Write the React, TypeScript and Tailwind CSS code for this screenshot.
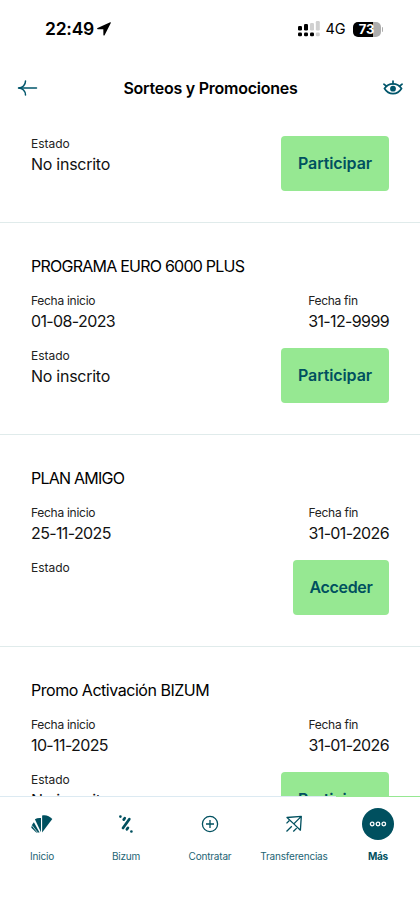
import { clsx } from "clsx";
import type { ReactNode } from "react";

type Promo = {
  title: string;
  start: string;
  end: string;
  status: string;
  action: string;
};

const promos: Promo[] = [
  {
    title: "PROGRAMA EURO 6000 PLUS",
    start: "01-08-2023",
    end: "31-12-9999",
    status: "No inscrito",
    action: "Participar",
  },
  {
    title: "PLAN AMIGO",
    start: "25-11-2025",
    end: "31-01-2026",
    status: "",
    action: "Acceder",
  },
  {
    title: "Promo Activación BIZUM",
    start: "10-11-2025",
    end: "31-01-2026",
    status: "No inscrito",
    action: "Participar",
  },
];

function StatusBar() {
  return (
    <div className="flex h-[58px] shrink-0 items-center justify-between pl-[45px] pr-[37px] text-black">
      <div className="flex items-center gap-[3px]">
        <span className="text-[17.5px] font-semibold tracking-[-0.25px]">22:49</span>
        <svg width="14" height="14" viewBox="0 0 14 14" fill="currentColor">
          <path d="M13.2.2.6 5.9c-.8.4-.6 1.3.2 1.3l5.500.1.1 5.600c0 .8 1 1 1.300.2L13.800.9c.2-.5-.1-.9-.6-.7Z" />
        </svg>
      </div>
      <div className="flex items-center">
        <svg width="22" height="16" viewBox="0 0 22 16" fill="black">
          <rect x="0" y="5" width="4" height="4.5" rx="1.2" />
          <rect x="6" y="3" width="4" height="6.5" rx="1.2" />
          <rect x="12" y="2" width="4" height="7.5" rx="1.2" fill="#d0d0d0" />
          <rect x="17.8" y="0" width="4" height="9.5" rx="1.2" fill="#d0d0d0" />
          <rect x="0" y="11.5" width="4" height="3.8" rx="1.2" />
          <rect x="6" y="11.5" width="4" height="3.8" rx="1.2" />
          <rect x="12" y="11.5" width="4" height="3.8" rx="1.2" />
          <rect x="17.8" y="11.5" width="4" height="3.8" rx="1.2" fill="#d0d0d0" />
        </svg>
        <span className="ml-[6px] w-[21px] text-[14.5px] tracking-[-0.2px]">4G</span>
        <div className="ml-[6px] flex items-center gap-px">
          <div className="flex h-[15px] w-[28px] items-center justify-center rounded-[5px] bg-[linear-gradient(to_right,#000_73%,#adadad_73%)] text-[13px] font-bold leading-none text-white">
            73
          </div>
          <div className="h-[5px] w-[1.5px] rounded-r-full bg-[#adadad]" />
        </div>
      </div>
    </div>
  );
}

function Header() {
  return (
    <header className="flex h-[60px] shrink-0 items-center justify-between px-[17px] text-[#00566b]">
      <svg width="21" height="17" viewBox="0 0 21 17" fill="none" stroke="currentColor" strokeWidth="1.5" strokeLinecap="round">
        <path d="M19.500 8H1.500" />
        <path d="M8.500 1C8.500 5 5.500 8 1.500 8c4 0 7 3 7 7" />
      </svg>
      <h1 className="text-[16px] font-semibold tracking-[-0.24px] text-black">
        Sorteos y Promociones
      </h1>
      <svg width="20" height="16" viewBox="0 0 20 16" fill="none" stroke="currentColor" strokeWidth="1.7" strokeLinecap="round">
        <path d="M1.5 8.5C3.5 5.5 6.500 3.800 10 3.800s6.500 1.700 8.500 4.700c-2 3.400-5 5.200-8.500 5.200S3.500 11.900 1.500 8.500Z" />
        <path d="M10 3.800V1M3.200 6 .9 4.200M16.800 6l2.300-1.800" />
        <circle cx="10" cy="8.700" r="2.900" fill="currentColor" stroke="none" />
      </svg>
    </header>
  );
}

type FieldProps = { label: string; value: string; isDate?: boolean };

function Field({ label, value, isDate }: FieldProps) {
  return (
    <div>
      <p
        className={clsx(
          "text-[12px] leading-4 text-[#222]",
          isDate ? "tracking-[-0.28px]" : "tracking-[-0.02px]"
        )}
      >
        {label}
      </p>
      <p
        className={clsx(
          "text-[16px] leading-6 text-[#111]",
          isDate ? "tracking-[-0.62px]" : "tracking-[-0.26px]"
        )}
      >
        {value}
      </p>
    </div>
  );
}

function StatusRow({ status, action }: { status: string; action: string }) {
  return (
    <div className="flex items-start justify-between">
      <Field label="Estado" value={status} />
      <button
        className={clsx(
          "h-[54.7px] rounded-[4px] bg-[#96e892] pb-px text-center text-[16px] font-semibold text-[#00505f]",
          action === "Acceder" ? "w-24 tracking-[-0.32px]" : "w-[108px] tracking-[-0.1px]"
        )}
      >
        {action}
      </button>
    </div>
  );
}

function PromoCard({ promo }: { promo: Promo }) {
  const isUpper = promo.title === promo.title.toUpperCase();

  return (
    <article className="h-[212px] shrink-0 border-b border-[#e0ebeb] px-[31px] pt-[31px]">
      <h2
        className={clsx(
          "text-[16px] leading-6 text-black",
          isUpper ? "tracking-[-0.76px]" : "tracking-[-0.47px]"
        )}
      >
        {promo.title}
      </h2>
      <div className="mb-[15px] mt-[15px] flex justify-between">
        <Field label="Fecha inicio" value={promo.start} isDate />
        <Field label="Fecha fin" value={promo.end} isDate />
      </div>
      <StatusRow status={promo.status} action={promo.action} />
    </article>
  );
}

function HomeIcon() {
  return (
    <svg width="22" height="20" viewBox="0 0 22 20" fill="currentColor">
      <path d="M11.1 1.400C15 .5 18.500 1.900 21.300 4.900L11.100 18.500Z" />
      <path d="M3.900 5.300C5.700 4.200 7.700 3.800 10 4.100v14.200Z" />
      <path d="M2.900 8.300 8.600 18.400H5.300L.3 13.800C.6 11.700 1.500 9.800 2.900 8.300Z" />
      <path d="m.9 11.400 5.600 7" stroke="white" strokeWidth=".7" />
    </svg>
  );
}

function BizumIcon() {
  return (
    <svg width="16" height="20" viewBox="0 0 16 20" fill="none" stroke="currentColor" strokeWidth="2.7" strokeLinecap="round">
      <path d="M6.700 4.200 5.700 5.600M11.300 5.200 5 14M9.900 13.900l-1 1.400" />
      <path d="M2.400 2.600h.01M13.400 17.500h.01" />
    </svg>
  );
}

function ContractIcon() {
  return (
    <svg width="18" height="18" viewBox="0 0 18 18" fill="none" stroke="currentColor" strokeWidth="1.3">
      <circle cx="9" cy="9" r="7.600" />
      <path d="M9 5v8M5 9h8" />
    </svg>
  );
}

function TransferIcon() {
  return (
    <svg width="18" height="18" viewBox="0 0 18 18" fill="none" stroke="currentColor" strokeWidth="1.3" strokeLinejoin="round">
      <path d="M2 2.500 16.300 1.400 15.400 15.200 8.800 8.900ZM16.300 1.400 8.800 8.900" />
      <path d="m1.500 8.400 2.900-2.900M1.500 16.500l5.300-5.300M8.300 16.500l3.400-3.400" />
    </svg>
  );
}

function MoreIcon() {
  return (
    <span className="flex size-8 items-center justify-center rounded-full bg-[#00505f]">
      <svg width="18" height="6" viewBox="0 0 18 6" fill="none" stroke="white" strokeWidth="1.3">
        <circle cx="3.200" cy="3" r="1.800" />
        <circle cx="9" cy="3" r="1.800" />
        <circle cx="14.800" cy="3" r="1.800" />
      </svg>
    </span>
  );
}

const tabs: { label: string; icon: ReactNode; active?: boolean }[] = [
  { label: "Inicio", icon: <HomeIcon /> },
  { label: "Bizum", icon: <BizumIcon /> },
  { label: "Contratar", icon: <ContractIcon /> },
  { label: "Transferencias", icon: <TransferIcon /> },
  { label: "Más", icon: <MoreIcon />, active: true },
];

function TabBar() {
  return (
    <nav className="grid h-[114px] shrink-0 grid-cols-5 bg-white text-[#00505f]">
      {tabs.map((tab) => (
        <button
          key={tab.label}
          className={clsx(
            "flex flex-col items-center border-t pt-[11px]",
            tab.active ? "border-[#96e892]" : "border-[#dceaf2]"
          )}
        >
          <span className="flex h-8 items-center">{tab.icon}</span>
          <span
            className={clsx(
              "mt-2 text-[10px] leading-4",
              tab.active ? "font-bold tracking-[-0.3px]" : "tracking-[-0.2px] text-[#1c6474]"
            )}
          >
            {tab.label}
          </span>
        </button>
      ))}
    </nav>
  );
}

export default function App() {
  return (
    <div className="flex h-[910px] w-[420px] flex-col overflow-hidden bg-white font-['Inter','Liberation_Sans',sans-serif]">
      <StatusBar />
      <Header />
      <main className="flex min-h-0 flex-1 flex-col overflow-hidden">
        {/* Tail of the card scrolled under the header */}
        <div className="h-[105px] shrink-0 border-b border-[#e0ebeb] px-[31px] pt-[18px]">
          <StatusRow status="No inscrito" action="Participar" />
        </div>
        {promos.map((promo) => (
          <PromoCard key={promo.title} promo={promo} />
        ))}
      </main>
      <TabBar />
    </div>
  );
}
